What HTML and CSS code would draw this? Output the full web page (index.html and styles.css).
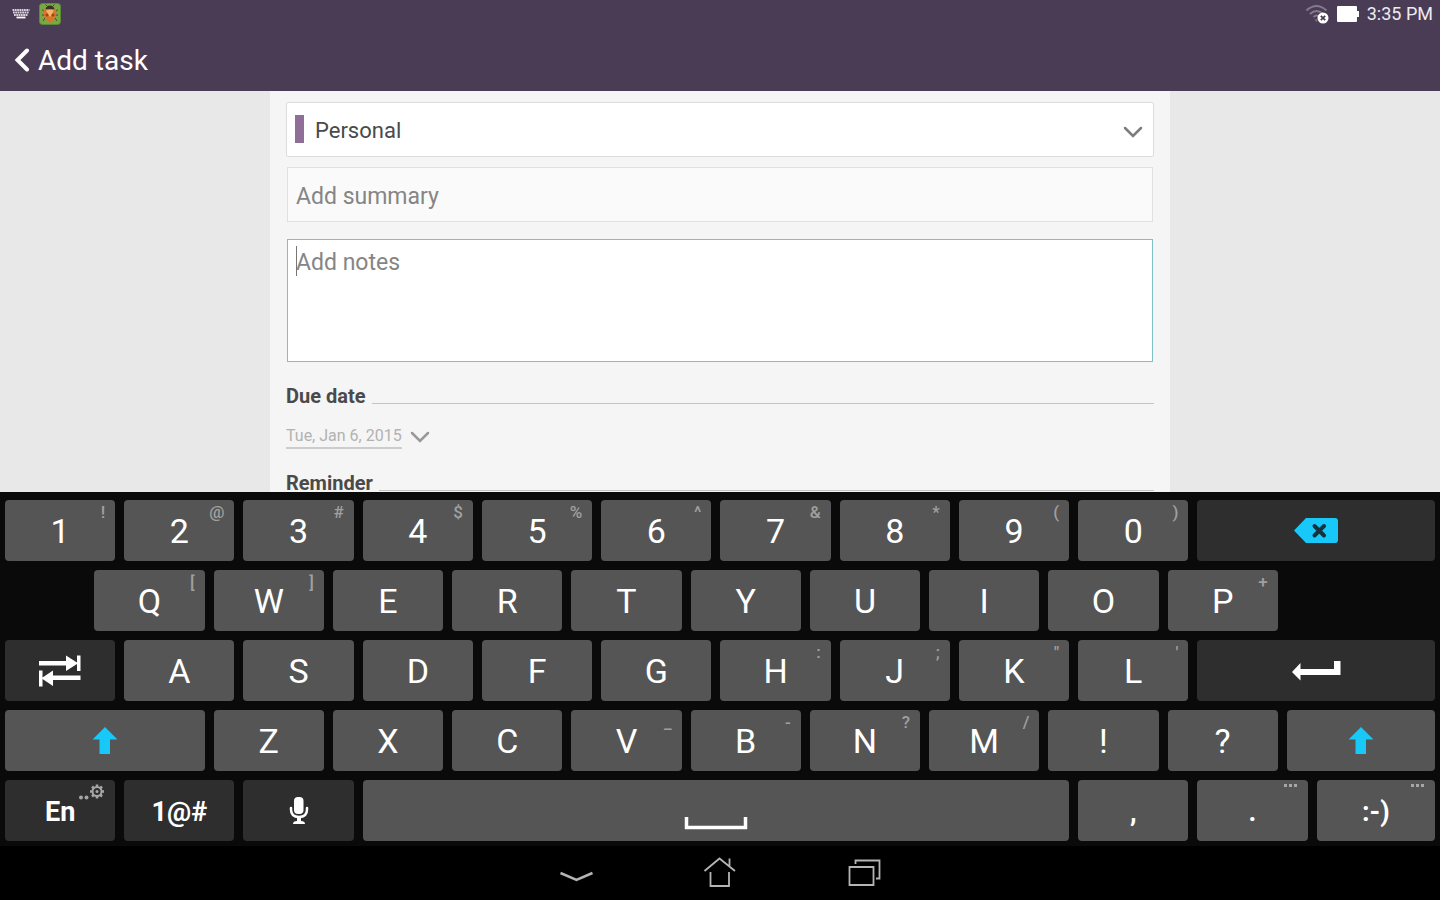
FILE: index.html
```
<!DOCTYPE html>
<html lang="en">
<head>
    <meta charset="UTF-8">
    <meta name="viewport" content="width=device-width, initial-scale=1.0">
    <title>Add task</title>
    <link rel="stylesheet" href="styles.css">
</head>
<body>
    <header class="header">
        <div class="status-bar">
            <div class="status-left">
                <svg width="18" height="12" viewBox="0 0 18 12">
                    <path d="M0.500 2h17M1 4.500h16M2 7h14" stroke="#d6d0da" stroke-width="2" stroke-dasharray="1.8 0.500"/>
                    <path d="M4.500 9.500h9" stroke="#ffffff" stroke-width="1.800"/>
                </svg>
                <svg width="22" height="22" viewBox="0 0 22 22">
                    <rect x="0.500" y="0.500" width="21" height="21" rx="3" fill="#7aa848" stroke="#5d8a35"/>
                    <path d="M6 9L3 6.500M16 9l3-2.500M6 12H3M16 12h3M6 15l-2 3M16 15l2 3M8 3L6.500 1.500M14 3l1.500-1.500" stroke="#4a4a20" stroke-width="1"/>
                    <path d="M6.500 6.500a4.500 4 0 0 1 9 0z" fill="#3a3424"/>
                    <path d="M5 7q6-2 12 0 1.500 8-6 13-7.500-5-6-13z" fill="#d9762a"/>
                    <path d="M7 7.500q4-1.500 8 0L11 14z" fill="#f3b56a"/>
                    <circle cx="8" cy="12" r="1.500" fill="#a5401a"/>
                    <circle cx="14" cy="12" r="1.500" fill="#a5401a"/>
                </svg>
            </div>
            <div class="status-right">
                <svg width="23" height="20" viewBox="0 0 23 20" fill="none">
                    <path d="M0.500 6.500q10-9 20 0M4 10q6.500-6 13 0M7.500 13q3-3 6 0" stroke="#85798d" stroke-width="2"/>
                    <path d="M8.500 15.500l2 2.500 1-2.500z" fill="#85798d"/>
                    <circle cx="17" cy="14" r="5.500" fill="#ffffff"/>
                    <path d="M14.800 11.800l4.400 4.400M19.200 11.800l-4.400 4.400" stroke="#4b3c55" stroke-width="1.800"/>
                </svg>
                <svg width="22" height="16" viewBox="0 0 22 16">
                    <path d="M1 0h18q1 0 1 1v4h2v6h-2v4q0 1-1 1H1q-1 0-1-1V1q0-1 1-1z" fill="#ffffff"/>
                </svg>
                <span class="clock">3:35 PM</span>
            </div>
        </div>
        <div class="title-bar">
            <button class="back" aria-label="Back">
                <svg width="16" height="24" viewBox="0 0 16 24">
                    <path d="M13 2.500L3.500 12l9.500 9.500" fill="none" stroke="#ffffff" stroke-width="4" stroke-linecap="round"/>
                </svg>
            </button>
            <h1>Add task</h1>
        </div>
    </header>

    <main class="content">
        <form class="panel">
            <div class="list-picker">
                <span class="list-color"></span>
                <select class="list-select" aria-label="List">
                    <option>Personal</option>
                </select>
                <svg class="chevron" width="20" height="12" viewBox="0 0 20 12">
                    <path d="M2 2l8 8 8-8" fill="none" stroke="#7c7c7c" stroke-width="2.500" stroke-linecap="round"/>
                </svg>
            </div>
            <input class="summary" type="text" placeholder="Add summary" aria-label="Summary">
            <div class="notes-wrap">
                <textarea class="notes" placeholder="Add notes" aria-label="Notes"></textarea>
                <span class="caret"></span>
            </div>
            <div class="section-title"><h2>Due date</h2><span class="rule"></span></div>
            <button class="date" type="button">
                <span>Tue, Jan 6, 2015</span>
                <svg width="20" height="12" viewBox="0 0 20 12">
                    <path d="M2 2l8 8 8-8" fill="none" stroke="#999999" stroke-width="2.500" stroke-linecap="round"/>
                </svg>
            </button>
            <div class="section-title"><h2>Reminder</h2><span class="rule"></span></div>
        </form>
    </main>

    <div class="keyboard">
        <!-- Row 1 -->
        <button class="key">1<small>!</small></button>
        <button class="key">2<small>@</small></button>
        <button class="key">3<small>#</small></button>
        <button class="key">4<small>$</small></button>
        <button class="key">5<small>%</small></button>
        <button class="key">6<small>^</small></button>
        <button class="key">7<small>&amp;</small></button>
        <button class="key">8<small>*</small></button>
        <button class="key">9<small>(</small></button>
        <button class="key">0<small>)</small></button>
        <button class="key dark wide-8" aria-label="Backspace">
            <svg width="46" height="26" viewBox="0 0 46 26">
                <path d="M1 12.500L13 0h29q3 0 3 3v19q0 3-3 3H13z" fill="#18c8f8"/>
                <path d="M21.500 8l9.500 9.500M31 8l-9.500 9.500" stroke="#17323c" stroke-width="4" stroke-linecap="round"/>
            </svg>
        </button>

        <!-- Row 2 -->
        <button class="key indent">Q<small>[</small></button>
        <button class="key">W<small>]</small></button>
        <button class="key">E</button>
        <button class="key">R</button>
        <button class="key">T</button>
        <button class="key">Y</button>
        <button class="key">U</button>
        <button class="key">I</button>
        <button class="key">O</button>
        <button class="key">P<small>+</small></button>

        <!-- Row 3 -->
        <button class="key dark row-start" aria-label="Tab">
            <svg width="42" height="32" viewBox="0 0 42 32">
                <path d="M0 6h27V0.500l11 7V0.500h3.500v15.500H38V9L27 16v-5.500H0z" fill="#ffffff"/>
                <path d="M41.500 20.500H14V15.500L3.500 22.500v-7H0v16h3.500v-7.500l10.500 7v-6h27.500z" fill="#ffffff"/>
            </svg>
        </button>
        <button class="key">A</button>
        <button class="key">S</button>
        <button class="key">D</button>
        <button class="key">F</button>
        <button class="key">G</button>
        <button class="key">H<small>:</small></button>
        <button class="key">J<small>;</small></button>
        <button class="key">K<small>"</small></button>
        <button class="key">L<small>'</small></button>
        <button class="key dark wide-8" aria-label="Enter">
            <svg width="50" height="20" viewBox="0 0 50 20">
                <path d="M1 11L9.500 2v6H43V0h6.500v14h-40v5.500z" fill="#ffffff"/>
            </svg>
        </button>

        <!-- Row 4 -->
        <button class="key wide-7" aria-label="Shift">
            <svg width="26" height="28" viewBox="0 0 26 28">
                <path d="M13 0l12.500 12.500H18V27H7.500V12.500H0.500z" fill="#18c8f8"/>
            </svg>
        </button>
        <button class="key">Z</button>
        <button class="key">X</button>
        <button class="key">C</button>
        <button class="key">V<small>_</small></button>
        <button class="key">B<small>-</small></button>
        <button class="key">N<small>?</small></button>
        <button class="key">M<small>/</small></button>
        <button class="key">!</button>
        <button class="key">?</button>
        <button class="key wide-5" aria-label="Shift">
            <svg width="26" height="28" viewBox="0 0 26 28">
                <path d="M13 0l12.500 12.500H18V27H7.500V12.500H0.500z" fill="#18c8f8"/>
            </svg>
        </button>

        <!-- Row 5 -->
        <button class="key dark label">En
            <svg class="hint-icon" width="26" height="16" viewBox="0 0 26 16">
                <circle cx="2" cy="13.500" r="2" fill="#a6a6a6"/>
                <circle cx="7.500" cy="13.500" r="2" fill="#a6a6a6"/>
                <circle cx="18" cy="7.500" r="4.500" fill="none" stroke="#a6a6a6" stroke-width="2"/>
                <circle cx="18" cy="7.500" r="1.500" fill="#a6a6a6"/>
                <path d="M18 0.500v2.500M18 12v2.500M11 7.500h2.500M22.500 7.500H25M13 2.500l2 2M21 10.500l2 2M13 12.500l2-2M21 4.500l2-2" stroke="#a6a6a6" stroke-width="2.500"/>
            </svg>
        </button>
        <button class="key dark label">1@#</button>
        <button class="key dark" aria-label="Voice input">
            <svg width="20" height="28" viewBox="0 0 20 28">
                <rect x="5" y="0" width="9.500" height="17" rx="4" fill="#ffffff"/>
                <path d="M2 11v1.500q0 7.500 8 7.500t8-7.500V11" fill="none" stroke="#ffffff" stroke-width="2.500" stroke-linecap="round"/>
                <path d="M8 20h4v4q4 0 4 3H4q0-3 4-3z" fill="#ffffff"/>
            </svg>
        </button>
        <button class="key space" aria-label="Space">
            <svg width="64" height="14" viewBox="0 0 64 14">
                <path d="M2.500 0v10.500h59V0" fill="none" stroke="#ffffff" stroke-width="3.500"/>
            </svg>
        </button>
        <button class="key label">,</button>
        <button class="key label">.
            <svg class="hint-icon" width="14" height="4" viewBox="0 0 14 4">
                <path d="M0 0h3v3H0zM5 0h3v3H5zM10 0h3v3h-3z" fill="#a6a6a6"/>
            </svg>
        </button>
        <button class="key label">:-)
            <svg class="hint-icon" width="14" height="4" viewBox="0 0 14 4">
                <path d="M0 0h3v3H0zM5 0h3v3H5zM10 0h3v3h-3z" fill="#a6a6a6"/>
            </svg>
        </button>
    </div>

    <nav class="nav-bar">
        <button aria-label="Hide keyboard">
            <svg width="34" height="32" viewBox="0 0 34 32">
                <path d="M1.500 16l16 7 16-7" fill="none" stroke="#b4b4b4" stroke-width="2.500"/>
            </svg>
        </button>
        <button aria-label="Home">
            <svg width="34" height="32" viewBox="0 0 34 32">
                <path d="M1.500 14L16.500 1.500l15.500 12.500M26.500 9V1.500M7.500 15v14h18.500V15" fill="none" stroke="#b4b4b4" stroke-width="1.800"/>
            </svg>
        </button>
        <button aria-label="Recent apps">
            <svg width="34" height="32" viewBox="0 0 34 32">
                <path d="M2.500 10h24v18h-24zM8.500 7V3.500h24V21.500H29" fill="none" stroke="#b4b4b4" stroke-width="1.800"/>
            </svg>
        </button>
    </nav>
</body>
</html>
```
FILE: styles.css
```
* {
    box-sizing: border-box;
}

body {
    margin: 0;
    height: 100vh;
    display: flex;
    flex-direction: column;
    font-family: Roboto, sans-serif;
    background-color: #000000;
}

button, input, select, textarea {
    font-family: inherit;
    margin: 0;
}

button {
    border: none;
    background: none;
    padding: 0;
    cursor: pointer;
}

svg {
    display: block;
}

/* Header */
.header {
    background-color: #4b3c55;
    color: #ffffff;
    padding-bottom: 10px;
}

.status-bar {
    display: flex;
    justify-content: space-between;
    align-items: center;
    height: 28px;
    padding: 0 7px 0 12px;
}

.status-left, .status-right {
    display: flex;
    align-items: center;
    gap: 8px;
}

.status-left {
    gap: 9px;
}

.clock {
    font-size: 18px;
    line-height: 28px;
    color: #eeebf0;
}

.title-bar {
    display: flex;
    align-items: center;
    gap: 8px;
    height: 53px;
    padding: 10px 14px 0;
}

h1 {
    margin: 0;
    padding-top: 2px;
    font-size: 28px;
    line-height: 40px;
    font-weight: 400;
}

/* Form */
.content {
    flex: 1;
    min-height: 0;
    overflow: hidden;
    background-color: #e8e8e8;
}

.panel {
    width: 62.5%;
    min-height: 100%;
    margin: 0 auto;
    padding: 11px 16px;
    background-color: #f5f5f5;
}

.list-picker {
    position: relative;
    height: 55px;
    margin-bottom: 10px;
}

.list-select {
    appearance: none;
    width: 100%;
    height: 100%;
    padding: 2px 40px 0 28px;
    border: 1px solid #dcdcdc;
    border-radius: 2px;
    background-color: #ffffff;
    font-size: 22px;
    color: #4a4a4a;
}

.list-color {
    position: absolute;
    left: 9px;
    top: 13px;
    width: 9px;
    height: 28px;
    background-color: #8f6f98;
}

.chevron {
    position: absolute;
    right: 11px;
    top: 24px;
}

.summary, .notes {
    display: block;
    width: 100%;
    border: 1px solid #e0e0e0;
    border-radius: 0;
    font-size: 23px;
    outline: none;
}

.summary {
    height: 55px;
    padding: 4px 8px 0;
    background-color: #fafafa;
}

.notes-wrap {
    position: relative;
    margin: 17px 0 22px;
}

.summary, .notes-wrap {
    width: calc(100% - 2px);
    margin-left: 1px;
}

.notes {
    height: 123px;
    padding: 8px;
    line-height: 30px;
    border-color: #7fc0c4;
    background-color: #ffffff;
    resize: none;
}

.summary::placeholder, .notes::placeholder {
    color: #858585;
}

.caret {
    position: absolute;
    left: 9px;
    top: 7px;
    width: 1px;
    height: 30px;
    background-color: #777777;
}

.section-title {
    display: flex;
    align-items: flex-end;
    gap: 6px;
}

h2 {
    margin: 0;
    font-size: 20px;
    line-height: 24px;
    font-weight: 700;
    color: #4a4a4a;
}

.rule {
    flex: 1;
    height: 1px;
    margin-bottom: 4px;
    background-color: #c4c4c4;
}

.date {
    display: flex;
    align-items: center;
    gap: 8px;
    margin: 17px 0 22px;
    font-size: 16px;
    line-height: 22px;
    color: #b2b2b2;
}

.date span {
    border-bottom: 2px solid #cccccc;
}

/* Keyboard */
.keyboard {
    display: grid;
    grid-template-columns: repeat(47, 1fr) 29px;
    grid-auto-rows: 61px;
    gap: 9px;
    padding: 8px 5px 5px;
    background-color: #0a0a0a;
}

.key {
    grid-column: span 4;
    position: relative;
    display: flex;
    align-items: center;
    justify-content: center;
    min-width: 0;
    border-radius: 4px;
    background-color: #555555;
    color: #ffffff;
    font-size: 34px;
    line-height: 40px;
    padding-top: 1px;
}

.key small {
    position: absolute;
    right: 10px;
    top: 2px;
    font-size: 17px;
    line-height: 20px;
    font-weight: 500;
    color: #a0a0a0;
}

.dark {
    background-color: #2e2e2e;
}

.label {
    padding-top: 3px;
    font-size: 27px;
    font-weight: 700;
}

.row-start {
    grid-column: 1 / span 4;
}

.indent {
    grid-column: 4 / span 4;
}

.wide-5 {
    grid-column: span 5;
}

.wide-7 {
    grid-column: span 7;
}

.wide-8 {
    grid-column: span 8;
}

.space {
    grid-column: span 24;
    align-items: flex-end;
    padding-bottom: 10px;
}

.hint-icon {
    position: absolute;
    right: 10px;
    top: 4px;
}

/* System navigation */
.nav-bar {
    display: flex;
    justify-content: center;
    align-items: center;
    gap: 110px;
    height: 54px;
}
```
